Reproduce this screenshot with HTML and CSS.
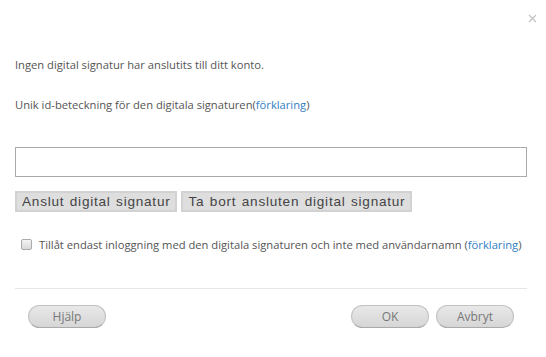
FILE: index.html
```html
<!DOCTYPE html>
<html lang="sv">
<head>
  <meta charset="UTF-8">
  <title>Digital signatur</title>
  <link rel="stylesheet" href="styles.css">
</head>
<body>
  <div class="dialog">
    <div class="head">
      <button class="close" title="Stäng">
        <svg width="9" height="9" viewBox="0 0 9 9"><path d="M1 1L8 8M8 1L1 8" stroke="#c4c4c4" stroke-width="1.3" fill="none"/></svg>
      </button>
    </div>

    <div class="content">
      <p class="info">Ingen digital signatur har anslutits till ditt konto.</p>
      <p class="label">Unik id-beteckning för den digitala signaturen(<a href="#">förklaring</a>)</p>

      <input type="text" class="sig-input">

      <div class="sig-actions">
        <button class="sig-btn">Anslut digital signatur</button>
        <button class="sig-btn">Ta bort ansluten digital signatur</button>
      </div>

      <label class="only-sig">
        <input type="checkbox">
        <span>Tillåt endast inloggning med den digitala signaturen och inte med användarnamn (<a href="#">förklaring</a>)</span>
      </label>
    </div>

    <div class="footer">
      <button class="pill">Hjälp</button>
      <div class="footer-right">
        <button class="pill">OK</button>
        <button class="pill">Avbryt</button>
      </div>
    </div>
  </div>
</body>
</html>
```

FILE: styles.css
```css
html, body {
  margin: 0;
  padding: 0;
  background: #fff;
  font-family: 'Open Sans', 'Lato', sans-serif;
  font-size: 11.2px;
  color: #555;
}

.dialog {
  width: 546px;
  height: 357px;
  box-sizing: border-box;
  padding: 0 19px 0 15px;
}

/* stäng-knappen uppe till höger */
.head {
  height: 36px;
  display: flex;
  justify-content: flex-end;
  align-items: flex-start;
  padding-top: 14px;
  box-sizing: border-box;
  margin-right: -10px;
}

.close {
  border: none;
  background: none;
  padding: 0;
  width: 9px;
  height: 9px;
  cursor: pointer;
}

.close svg {
  display: block;
}

.content p {
  margin: 0;
  line-height: 14px;
}

.info {
  padding-top: 22px;
}

.label {
  padding-top: 26px;
}

a {
  color: #2f80c4;
  text-decoration: none;
}

.sig-input {
  display: block;
  width: 100%;
  height: 30px;
  margin-top: 35px;
  box-sizing: border-box;
  border: 1px solid #aaa;
  outline: none;
}

.sig-actions {
  display: flex;
  gap: 4px;
  margin-top: 14px;
}

.sig-btn {
  height: 21px;
  padding: 0 5px;
  border: 2px solid #d2d2d2;
  background: #dedede;
  font-family: 'Liberation Sans', Arial, sans-serif;
  font-size: 13.6px;
  color: #444;
  letter-spacing: 0.75px;
  word-spacing: 1px;
  cursor: pointer;
}

.only-sig {
  display: flex;
  align-items: center;
  height: 14px;
  margin-top: 25px;
  gap: 7px;
  padding-left: 6px;
}

.only-sig input {
  appearance: none;
  width: 11px;
  height: 11px;
  margin: 0;
  border: 1px solid #aaa;
  border-radius: 2px;
  background: linear-gradient(#f4f4f4, #d9d9d9);
}

.footer {
  display: flex;
  justify-content: space-between;
  margin-top: 37px;
  padding: 16px 13px 0 13px;
  border-top: 1px solid #e6e6e6;
}

.footer-right {
  display: flex;
  gap: 7px;
}

.pill {
  width: 78px;
  height: 23px;
  border: 1px solid #c2c2c2;
  border-bottom-color: #aaa;
  border-radius: 12px;
  background: linear-gradient(#e8e8e8, #d6d6d6);
  font-family: 'Open Sans', 'Lato', sans-serif;
  font-size: 12px;
  color: #777;
  cursor: pointer;
}
```
